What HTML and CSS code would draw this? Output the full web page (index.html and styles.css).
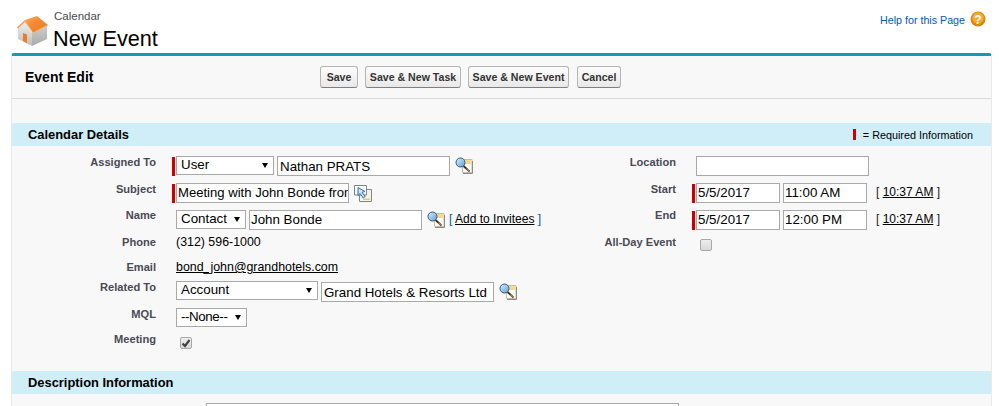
FILE: index.html
```html
<!DOCTYPE html>
<html lang="en">
<head>
<meta charset="utf-8">
<title>New Event</title>
<link rel="stylesheet" href="styles.css">
</head>
<body>
<svg class="defs" width="0" height="0" aria-hidden="true">
  <defs>
    <linearGradient id="glass" x1="0" y1="0" x2="1" y2="1"><stop offset="0" stop-color="#dcEEFb"/><stop offset="1" stop-color="#5f9fd2"/></linearGradient>
    <linearGradient id="roof" x1="0" y1="0" x2="1" y2="1"><stop offset="0" stop-color="#f9b765"/><stop offset=".5" stop-color="#f28a32"/><stop offset="1" stop-color="#ee7a24"/></linearGradient>
    <linearGradient id="wall" x1="0" y1="0" x2="0" y2="1"><stop offset="0" stop-color="#f2f2f2"/><stop offset="1" stop-color="#bcbcbc"/></linearGradient>
    <linearGradient id="side" x1="0" y1="0" x2="0" y2="1"><stop offset="0" stop-color="#cfcfcf"/><stop offset="1" stop-color="#a9a9a9"/></linearGradient>
    <symbol id="lookup" viewBox="0 0 18 18">
      <path d="M7.500 3.500h9.500v13H7.500z" fill="#fff" stroke="#bdbdb6"/>
      <path d="M10 4h6.500v4H10z" fill="#fbd98c"/>
      <path d="M8 17.500h9.500V5" fill="none" stroke="#8d8d88"/>
      <path d="M8.500 10l6 5.500" stroke="#3c3020" stroke-width="1.800"/>
      <path d="M11.500 12.800l2.800 2.500" stroke="#b9823a" stroke-width="1.200"/>
      <circle cx="5.500" cy="6.500" r="4.500" fill="url(#glass)" stroke="#2e5a80" stroke-width="1"/>
    </symbol>
  </defs>
</svg>
<header class="page-head">
  <svg class="house" viewBox="0 0 33 32" width="33" height="32" aria-hidden="true">
    <path d="M2 12l7-6 7 12v13L2 24z" fill="url(#wall)"/>
    <path d="M16 18l15-8v14l-15 7z" fill="url(#side)"/>
    <path d="M7 18l4 1.500V28l-4-2z" fill="#ee7a28"/>
    <path d="M1 12.500L9 5l12-4 11 9-15 8-8-11-7 6.500z" fill="url(#roof)"/>
    <path d="M9 5.500L17 18l15-8" fill="none" stroke="#fbbf78" stroke-width=".8"/>
  </svg>
  <div class="titles">
    <div class="crumb">Calendar</div>
    <h1>New Event</h1>
  </div>
  <div class="help">
    <a href="#">Help for this Page</a>
    <svg viewBox="0 0 16 16" width="16" height="16" aria-hidden="true">
      <circle cx="8" cy="8" r="7.500" fill="#d9860f"/>
      <circle cx="8" cy="7" r="5.800" fill="#f3ab2f"/>
      <text x="8" y="12.500" text-anchor="middle" class="help-q">?</text>
    </svg>
  </div>
</header>
<main class="panel">
  <div class="panel-head">
    <h2>Event Edit</h2>
    <div class="buttons">
      <button type="button" class="b-save">Save</button>
      <button type="button" class="b-task">Save &amp; New Task</button>
      <button type="button" class="b-event">Save &amp; New Event</button>
      <button type="button" class="b-cancel">Cancel</button>
    </div>
  </div>
  <div class="spacer"></div>
  <section>
    <div class="section-bar">
      <h3>Calendar Details</h3>
      <span class="legend"><i class="req-mark"></i>= Required Information</span>
    </div>
    <div class="form-grid">
      <label class="lab">Assigned To</label>
      <div class="data req">
        <span class="sel w-user">User</span>
        <span class="inp w-wide">Nathan PRATS</span>
        <svg class="ic"><use href="#lookup"/></svg>
      </div>
      <label class="lab">Location</label>
      <div class="data ind"><span class="inp w-wide"></span></div>

      <label class="lab">Subject</label>
      <div class="data req">
        <span class="inp w-wide tight subj">Meeting with John Bonde from</span>
        <svg class="ic copy" viewBox="0 0 18 18" aria-hidden="true">
          <path d="M5.500 5.500h12v12h-12z" fill="#f4f4ee" stroke="#85857f"/>
          <path d="M9 14.500h7v1.500H9z" fill="#f0c860"/>
          <path d="M.5 1.500h12v9.500H.5z" fill="#fff" stroke="#77858c"/>
          <path d="M4 3.500v8l2.200-2 3 4.500 2-1.400-3-4.300 2.800-.8z" fill="#cfe3f3" stroke="#2d6fae"/>
        </svg>
      </div>
      <label class="lab">Start</label>
      <div class="data req">
        <span class="inp w-date">5/5/2017</span>
        <span class="inp w-date">11:00 AM</span>
        <span class="now">[ <a href="#">10:37 AM</a> ]</span>
      </div>

      <label class="lab up">Name</label>
      <div class="data ind">
        <span class="sel w-contact">Contact</span>
        <span class="inp w-wide tight">John Bonde</span>
        <svg class="ic"><use href="#lookup"/></svg>
        <span class="invitees">[ <a href="#">Add to Invitees</a> ]</span>
      </div>
      <label class="lab up">End</label>
      <div class="data req">
        <span class="inp w-date">5/5/2017</span>
        <span class="inp w-date">12:00 PM</span>
        <span class="now">[ <a href="#">10:37 AM</a> ]</span>
      </div>

      <label class="lab">Phone</label>
      <div class="data ind text">(312) 596-1000</div>
      <label class="lab">All-Day Event</label>
      <div class="data ind"><span class="check"></span></div>

      <label class="lab">Email</label>
      <div class="data ind text"><a href="#">bond_john@grandhotels.com</a></div>
      <div class="empty"></div><div class="empty"></div>

      <label class="lab">Related To</label>
      <div class="data ind">
        <span class="sel w-acct">Account</span>
        <span class="inp w-wide drop">Grand Hotels &amp; Resorts Ltd</span>
        <svg class="ic drop"><use href="#lookup"/></svg>
      </div>
      <div class="empty"></div><div class="empty"></div>

      <label class="lab">MQL</label>
      <div class="data ind"><span class="sel w-none">--None--</span></div>
      <div class="empty"></div><div class="empty"></div>

      <label class="lab">Meeting</label>
      <div class="data ind"><span class="check on">
        <svg viewBox="0 0 12 12" width="12" height="12" aria-hidden="true"><path d="M2.500 6.500l2.500 2.500 4.500-6" fill="none" stroke="#444" stroke-width="2.200"/></svg>
      </span></div>
      <div class="empty"></div><div class="empty"></div>
    </div>
  </section>
  <section>
    <div class="section-bar"><h3>Description Information</h3></div>
    <div class="textarea"></div>
  </section>
</main>
</body>
</html>
```
FILE: styles.css
```css
html, body { margin: 0; height: 406px; overflow: hidden; }
body { background: #fff; font-family: "Liberation Sans", Arial, sans-serif; color: #000; }
.defs { position: absolute; }
a { color: inherit; }

.page-head { display: flex; height: 53px; padding-left: 16px; padding-right: 13px; box-sizing: border-box; }
.house { margin-top: 15px; flex: none; }
.titles { margin-left: 4px; padding-top: 10px; flex: 1; }
.crumb { font-size: 11.5px; line-height: 13px; color: #4a4a56; padding-left: 1px; }
h1 { margin: 3px 0 0; font-size: 21.7px; line-height: 26px; font-weight: 400; color: #000; }
.help { display: flex; align-items: flex-start; gap: 5px; padding-top: 11px; }
.help a { font-size: 10.7px; line-height: 19px; color: #015ba7; text-decoration: none; }
.help-q { font: bold 12px "Liberation Sans", Arial, sans-serif; fill: #fff; }

.panel { margin: 0 7px 0 11px; background: #f8f8f8; border-top: 3px solid #1797c0; border-right: 1px solid #eaeaea; border-left: 1px solid #eaeaea; border-radius: 3px 3px 0 0; height: 353px; box-sizing: border-box; }
.panel-head { display: flex; align-items: center; height: 42px; border-bottom: 1px solid #dbdbdb; padding-left: 13px; }
h2 { margin: 0; width: 295px; font-size: 14px; font-weight: 700; flex: none; }
.buttons { display: flex; gap: 7px; }
button { height: 22px; padding: 0; border: 1px solid #b5b5b5; border-bottom-color: #7f7f7f; border-radius: 3px; background: linear-gradient(#fdfdfd, #e8e8e9); font: bold 10.6px "Liberation Sans", Arial, sans-serif; color: #333; }
.b-save { width: 38px; }
.b-task { width: 96px; }
.b-event { width: 101px; }
.b-cancel { width: 44px; margin-left: 1px; }
.spacer { height: 24px; }

.section-bar { display: flex; justify-content: space-between; align-items: center; height: 23px; background: #cfeef8; padding: 0 18px 0 16px; }
h3 { margin: 0; font-size: 12.9px; font-weight: 700; color: #000; }
.legend { font-size: 10.8px; display: flex; align-items: center; }
.req-mark { width: 3px; height: 11px; background: #c00; margin-right: 7px; }

.form-grid { display: grid; grid-template-columns: 144px 384px 104px 1fr; grid-template-rows: 27px 27px 26px 25px 20px 27px 25px 22px; padding-top: 10px; padding-bottom: 16px; column-gap: 16px; }
.lab { font-size: 11.1px; font-weight: 700; color: #4a4a56; text-align: right; line-height: 13px; }
.lab.up { margin-top: -1px; }
.data { display: flex; align-items: flex-start; font-size: 12.4px; padding-left: 4px; }
.req { position: relative; }
.req::before { content: ""; position: absolute; left: 0; top: 1px; width: 3px; height: 19px; background: #c00; }
.text { line-height: 13px; }

.inp, .sel { box-sizing: border-box; display: block; height: 20px; background: #fff; border: 1px solid #a9a9a9; font-size: 13.33px; line-height: 19px; white-space: nowrap; overflow: hidden; padding: 0 2px; flex: none; }
.tight { padding-left: 1px; line-height: 17px; }
.subj { font-size: 13.1px; }
.drop { margin-top: 1px; }
.sel { position: relative; height: 19px; line-height: 16px; padding-left: 4px; margin-right: 3px; }
.sel::after { content: ""; position: absolute; right: 5px; top: 6px; border: 3.500px solid transparent; border-top: 5.500px solid #000; border-bottom: 0; }
.w-user { width: 98px; }
.w-wide { width: 173px; }
.w-contact { width: 70px; }
.w-acct { width: 142px; }
.w-none { width: 71px; letter-spacing: -.4px; }
.w-date { width: 84px; margin-right: 3px; padding-left: 1px; line-height: 17px; }
.ic { width: 18px; height: 18px; margin-left: 5px; flex: none; }
.copy { margin-top: 1px; }
.invitees { font-size: 12px; margin-left: 4px; line-height: 18px; color: #015ba7; white-space: nowrap; }
.invitees a { color: #000; }
.now { font-size: 12px; margin-left: 6px; line-height: 18px; color: #222; white-space: nowrap; }
.now a { color: #000; }
.check { display: block; box-sizing: border-box; width: 12px; height: 12px; margin: 3px 0 0 4px; background: linear-gradient(#eee, #d8d8d8); border: 1px solid #a9a9a9; border-radius: 2px; }
.check.on { margin-top: 4px; overflow: hidden; }
.check.on svg { display: block; margin: -1px; }

.textarea { box-sizing: border-box; height: 20px; width: 473px; margin: 9px 0 0 194px; background: #fff; border: 1px solid #a9a9a9; }
```
